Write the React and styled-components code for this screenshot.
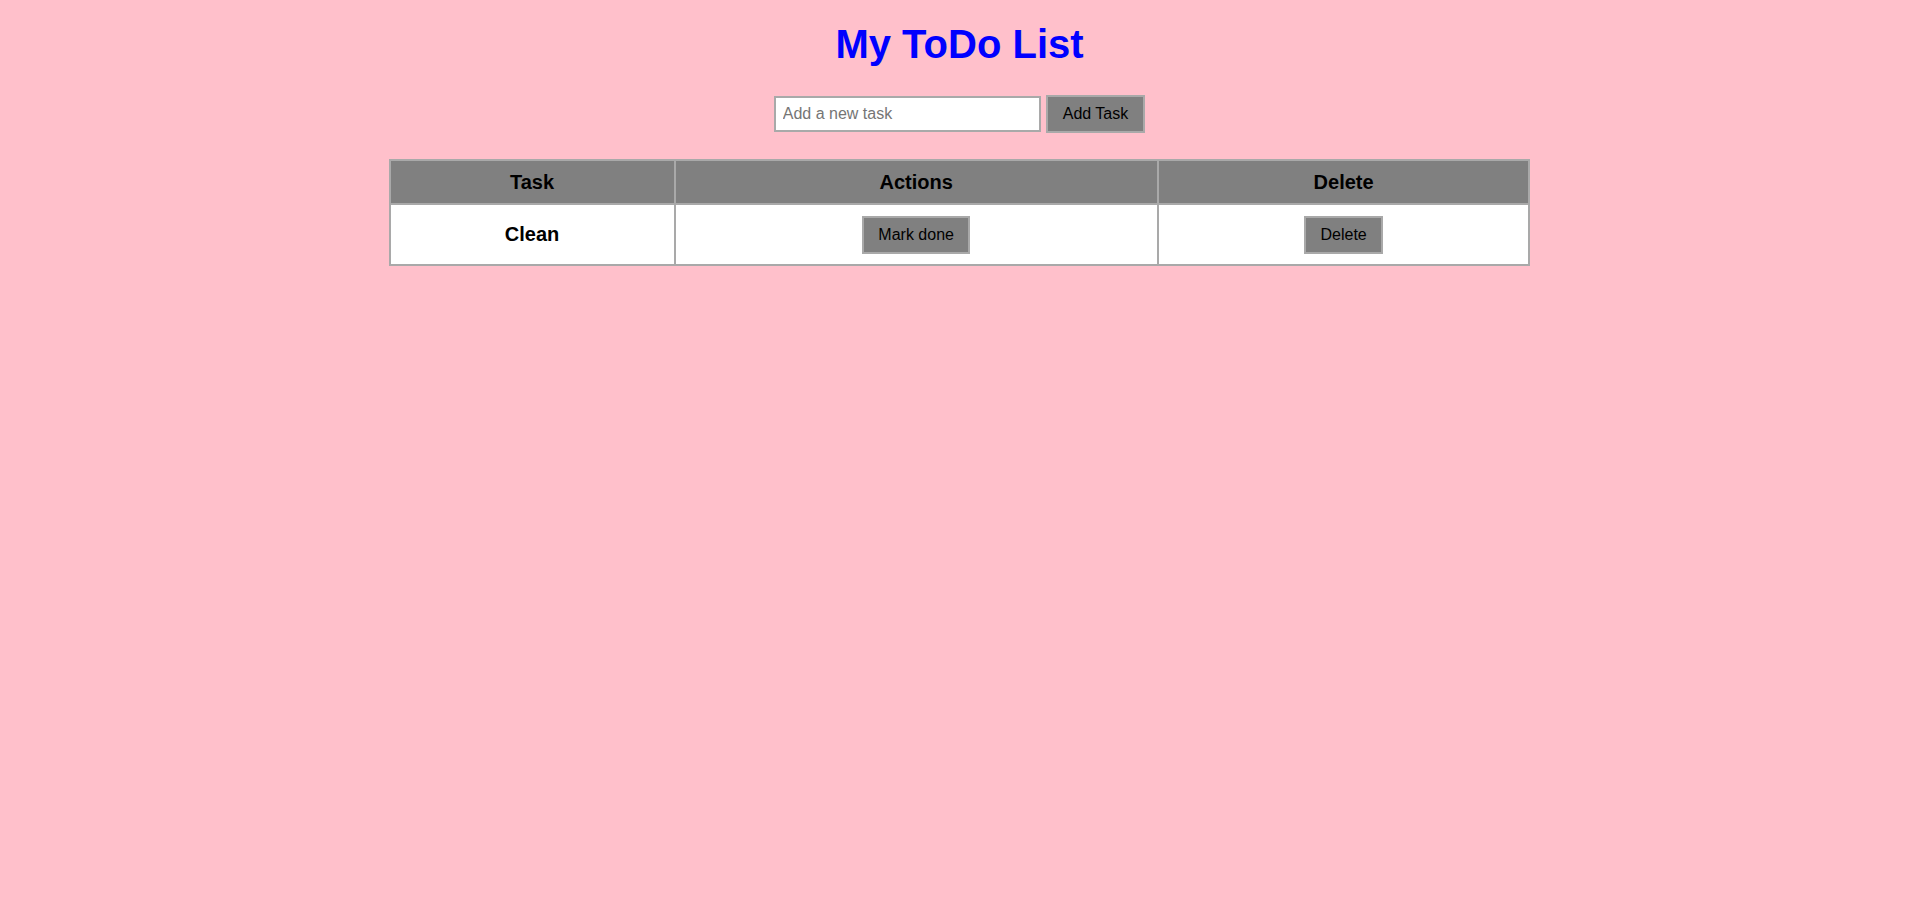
import { useState } from "react";
import styled, { createGlobalStyle } from "styled-components";

const GlobalStyle = createGlobalStyle`
  html, body {
    margin: 0;
    padding: 0;
    background-color: pink;
    font-family: "Liberation Sans", Arial, sans-serif;
  }
`;

const Container = styled.div`
  min-height: 100vh;
  display: flex;
  flex-direction: column;
  align-items: center;
  padding: 0 8px;
`;

const Title = styled.h1`
  font-size: 40px;
  line-height: 46px;
  font-weight: 700;
  color: blue;
  margin: 21px 0 0;
`;

const Form = styled.form`
  display: flex;
  align-items: center;
  gap: 5px;
  margin-top: 28px;
`;

const Input = styled.input`
  box-sizing: border-box;
  width: 267px;
  height: 36px;
  padding: 0 7px;
  border: 2px solid darkgray;
  background: white;
  font-family: inherit;
  font-size: 16px;
  color: black;
  outline: none;
  &::placeholder {
    color: #757575;
  }
`;

const Button = styled.button`
  box-sizing: border-box;
  height: 38px;
  padding: 0 ${(p) => (p.$wide ? "15px" : "14px")};
  border: 2px solid darkgray;
  background-color: gray;
  color: black;
  font-family: inherit;
  font-size: 16px;
  cursor: pointer;
`;

const Table = styled.table`
  width: 60%;
  margin-top: 26px;
  border-collapse: collapse;
  border: 2px solid darkgray;
`;

const Th = styled.th`
  width: ${(p) => p.$w};
  height: 42px;
  padding: 0 10px;
  border: 2px solid darkgray;
  background-color: gray;
  font-size: 20px;
  font-weight: 700;
  text-align: center;
`;

const Td = styled.td`
  height: 59px;
  padding: 0 10px;
  border: 2px solid darkgray;
  background-color: white;
  font-size: 20px;
  font-weight: ${(p) => (p.$bold ? 700 : 400)};
  text-align: center;
  vertical-align: middle;
`;

const App = () => {
  const [tasks, setTasks] = useState([{ id: 1, text: "Clean", done: false }]);
  const [text, setText] = useState("");

  const addTask = (e) => {
    e.preventDefault();
    if (!text.trim()) return;
    setTasks([...tasks, { id: Date.now(), text: text.trim(), done: false }]);
    setText("");
  };

  const toggle = (id) =>
    setTasks(tasks.map((t) => (t.id === id ? { ...t, done: !t.done } : t)));

  const remove = (id) => setTasks(tasks.filter((t) => t.id !== id));

  return (
    <>
      <GlobalStyle />
      <Container>
        <Title>My ToDo List</Title>
        <Form onSubmit={addTask}>
          <Input
            placeholder="Add a new task"
            value={text}
            onChange={(e) => setText(e.target.value)}
          />
          <Button type="submit" $wide>
            Add Task
          </Button>
        </Form>
        <Table>
          <thead>
            <tr>
              <Th $w="25%">Task</Th>
              <Th $w="42.4%">Actions</Th>
              <Th $w="32.6%">Delete</Th>
            </tr>
          </thead>
          <tbody>
            {tasks.map((t) => (
              <tr key={t.id}>
                <Td $bold>{t.text}</Td>
                <Td>
                  <Button onClick={() => toggle(t.id)}>
                    {t.done ? "Undo" : "Mark done"}
                  </Button>
                </Td>
                <Td>
                  <Button onClick={() => remove(t.id)}>Delete</Button>
                </Td>
              </tr>
            ))}
          </tbody>
        </Table>
      </Container>
    </>
  );
};

export default App;
